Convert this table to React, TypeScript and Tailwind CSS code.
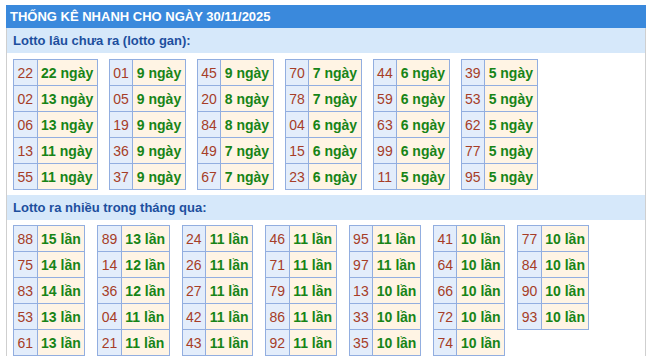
const ganTables: [string, number][][] = [
  [["22", 22], ["02", 13], ["06", 13], ["13", 11], ["55", 11]],
  [["01", 9], ["05", 9], ["19", 9], ["36", 9], ["37", 9]],
  [["45", 9], ["20", 8], ["84", 8], ["49", 7], ["67", 7]],
  [["70", 7], ["78", 7], ["04", 6], ["15", 6], ["23", 6]],
  [["44", 6], ["59", 6], ["63", 6], ["99", 6], ["11", 5]],
  [["39", 5], ["53", 5], ["62", 5], ["77", 5], ["95", 5]],
];

const nhieuTables: [string, number][][] = [
  [["88", 15], ["75", 14], ["83", 14], ["53", 13], ["61", 13]],
  [["89", 13], ["14", 12], ["36", 12], ["04", 11], ["21", 11]],
  [["24", 11], ["26", 11], ["27", 11], ["42", 11], ["43", 11]],
  [["46", 11], ["71", 11], ["79", 11], ["86", 11], ["92", 11]],
  [["95", 11], ["97", 11], ["13", 10], ["33", 10], ["35", 10]],
  [["41", 10], ["64", 10], ["66", 10], ["72", 10], ["74", 10]],
  [["77", 10], ["84", 10], ["90", 10], ["93", 10]],
];

function StatTable({ rows, unit }: { rows: [string, number][]; unit: string }) {
  return (
    <table className="border-collapse border border-[#92aee0] text-[14px] leading-none">
      <tbody>
        {rows.map(([num, count]) => (
          <tr key={num} className="h-[26px]">
            <td className="border border-[#92aee0] bg-[#e3edfb] px-[3.5px] text-center text-[#a63d28]">{num}</td>
            <td className="border border-[#92aee0] bg-[#fff4e4] px-[3.5px] font-bold text-[#178417]">
              {count} {unit}
            </td>
          </tr>
        ))}
      </tbody>
    </table>
  );
}

function SectionTitle({ children }: { children: React.ReactNode }) {
  return (
    <div className="flex h-[25px] items-center bg-[#d6e8fa] px-[6px] text-[13px] font-bold text-[#1d4f9e]">
      {children}
    </div>
  );
}

export default function App() {
  return (
    <div className="min-h-screen bg-white pl-[6px] pt-[5px]" style={{ fontFamily: '"Liberation Sans", Arial, sans-serif' }}>
      <div className="w-[640px]">
        <div className="flex h-[23px] items-center bg-[#3a89dc] px-[4px] text-[13px] font-bold text-white">
          THỐNG KÊ NHANH CHO NGÀY 30/11/2025
        </div>
        <div className="border-x border-[#cfcfcf]">
          <SectionTitle>Lotto lâu chưa ra (lotto gan):</SectionTitle>
          <div className="flex gap-[11px] px-[6px] pb-[5px] pt-[6px]">
            {ganTables.map((t, i) => (
              <StatTable key={i} rows={t} unit="ngày" />
            ))}
          </div>
          <SectionTitle>Lotto ra nhiều trong tháng qua:</SectionTitle>
          <div className="flex items-start gap-[12px] px-[6px] pb-[5px] pt-[5px]">
            {nhieuTables.map((t, i) => (
              <StatTable key={i} rows={t} unit="lần" />
            ))}
          </div>
        </div>
      </div>
    </div>
  );
}
